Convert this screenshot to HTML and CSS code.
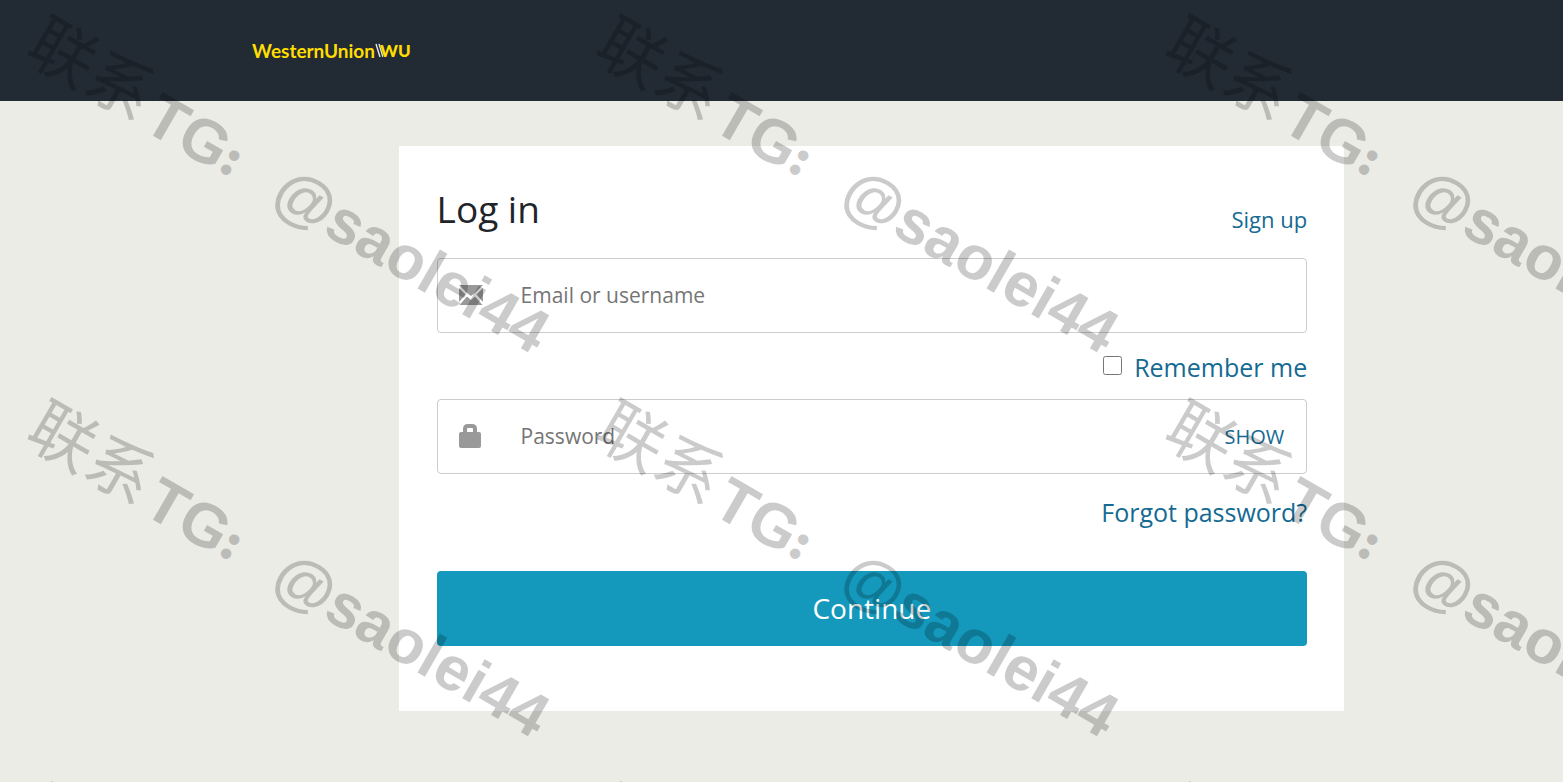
FILE: index.html
```html
<!DOCTYPE html>
<html lang="en">
<head>
    <meta charset="UTF-8">
    <meta name="viewport" content="width=device-width, initial-scale=1">
    <title>Log in</title>
    <link rel="stylesheet" href="styles.css">
</head>
<body>
    <header class="header">
        <div class="logo">
            <span class="logo-name">WesternUnion</span>
            <svg class="logo-bars" width="8" height="15" viewBox="0 0 8 15" aria-hidden="true">
                <path d="M1 1l4 13M4 1l4 13" fill="none" stroke="#e8e8e8" stroke-width="1.4"/>
            </svg>
            <span class="logo-mark">WU</span>
        </div>
    </header>

    <main class="card">
        <form onsubmit="return false">
            <div class="card-head">
                <h1>Log in</h1>
                <a class="signup" href="#">Sign up</a>
            </div>

            <div class="field">
                <svg class="icon" width="26" height="26" viewBox="0 0 26 26" aria-hidden="true">
                    <g fill="#999">
                        <path d="M1 2h24l-8 8-4 3-4-3z"/>
                        <path d="M1 5v14l6.500-7.500z"/>
                        <path d="M25 5v14l-6.500-7.500z"/>
                        <path d="M1.500 22L9 13.500l4 3.500 4-3.500 7.500 8.500z"/>
                    </g>
                </svg>
                <input type="text" placeholder="Email or username" aria-label="Email or username">
            </div>

            <div class="remember">
                <input type="checkbox" id="remember">
                <label for="remember">Remember me</label>
            </div>

            <div class="field">
                <svg class="icon" width="26" height="26" viewBox="0 0 26 26" aria-hidden="true">
                    <path d="M7 11V5q0-3 3-3h4q3 0 3 3v6" fill="none" stroke="#999" stroke-width="4"/>
                    <rect x="1" y="8" width="22" height="16" rx="2" fill="#999"/>
                </svg>
                <input type="password" placeholder="Password" aria-label="Password">
                <button class="show" type="button">SHOW</button>
            </div>

            <div class="forgot"><a href="#">Forgot password?</a></div>

            <button class="continue" type="submit">Continue</button>
        </form>
    </main>

    <!-- repeated watermark over the whole page -->
    <div class="watermark" aria-hidden="true">
        <div class="mark"><span class="han">联系</span>TG<span class="colon">：</span>@saolei44</div>
        <div class="mark"><span class="han">联系</span>TG<span class="colon">：</span>@saolei44</div>
        <div class="mark"><span class="han">联系</span>TG<span class="colon">：</span>@saolei44</div>
        <div class="mark"><span class="han">联系</span>TG<span class="colon">：</span>@saolei44</div>
        <div class="mark"><span class="han">联系</span>TG<span class="colon">：</span>@saolei44</div>
        <div class="mark"><span class="han">联系</span>TG<span class="colon">：</span>@saolei44</div>
        <div class="mark"><span class="han">联系</span>TG<span class="colon">：</span>@saolei44</div>
        <div class="mark"><span class="han">联系</span>TG<span class="colon">：</span>@saolei44</div>
        <div class="mark"><span class="han">联系</span>TG<span class="colon">：</span>@saolei44</div>
    </div>
</body>
</html>
```
FILE: styles.css
```css
* {
    box-sizing: border-box;
}

body {
    margin: 0;
    min-height: 100vh;
    position: relative;
    background-color: #ebece6;
    color: #212529;
    font-family: "Open Sans", "Noto Sans", sans-serif;
}

a {
    color: #146a92;
    text-decoration: none;
}

/* header */
.header {
    height: 101px;
    padding: 0 16%;
    display: flex;
    align-items: center;
    background-color: #222a33;
}

.logo {
    display: flex;
    align-items: center;
    padding-left: 2px;
    font-family: Lato, sans-serif;
    font-size: 19px;
    line-height: 24px;
    font-weight: 700;
    color: #ffdd00;
}

.logo-mark {
    margin-left: -3px;
    font-size: 17px;
    font-weight: 900;
}

/* login card */
.card {
    width: 60.5%;
    margin: 45px 0 71px 25.5%;
    padding: 38px 37px 65px 38px;
    background-color: #fff;
}

.card-head {
    display: flex;
    justify-content: space-between;
    align-items: flex-start;
    height: 74px;
}

h1 {
    margin: 0;
    font-size: 37px;
    line-height: 50px;
    font-weight: 400;
}

.signup {
    padding-top: 20px;
    font-size: 22px;
    line-height: 30px;
}

.field {
    display: flex;
    align-items: center;
    height: 75px;
    padding: 0 22px 0 20px;
    border: 1px solid #ccc;
    border-radius: 4px;
}

.icon {
    flex: none;
    margin-right: 37px;
}

.field input {
    flex: 1;
    min-width: 0;
    height: 100%;
    padding: 0 0 2px;
    border: 0;
    outline: 0;
    background: none;
    font-family: inherit;
    font-size: 21px;
}

.field input::placeholder {
    color: #757575;
}

.show {
    padding: 0;
    border: 0;
    background: none;
    color: #146a92;
    font-family: inherit;
    font-size: 20px;
    cursor: pointer;
}

.remember {
    display: flex;
    justify-content: flex-end;
    align-items: center;
    gap: 12px;
    height: 66px;
    padding-top: 2px;
    color: #146a92;
    font-size: 25px;
}

.remember input {
    width: 19px;
    height: 19px;
    margin: 0 0 4px;
}

.forgot {
    height: 97px;
    padding-top: 20px;
    text-align: right;
    font-size: 25px;
    line-height: 36px;
}

.continue {
    display: block;
    width: 100%;
    height: 75px;
    padding: 0 0 2px;
    border: 0;
    border-radius: 4px;
    background-color: #1499bc;
    color: #fff;
    font-family: inherit;
    font-size: 28px;
    cursor: pointer;
}

/* watermark */
.watermark {
    position: absolute;
    inset: 0;
    display: grid;
    grid-template-columns: repeat(3, 569px);
    grid-auto-rows: 384px;
    overflow: hidden;
    opacity: 0.2;
    pointer-events: none;
    color: #000;
    font-family: "Liberation Sans", "Noto Sans CJK SC", sans-serif;
    font-size: 62px;
    line-height: 30px;
    font-weight: 700;
}

.mark {
    padding-left: 48px;
    white-space: nowrap;
    transform: rotate(30deg);
    transform-origin: 0 0;
}

.han {
    padding-right: 6px;
    font-size: 66px;
    font-weight: 400;
    vertical-align: 3px;
}

.colon {
    padding-right: 28px;
    font-size: 34px;
    vertical-align: 4px;
    -webkit-text-stroke: 4px #000;
}
```
